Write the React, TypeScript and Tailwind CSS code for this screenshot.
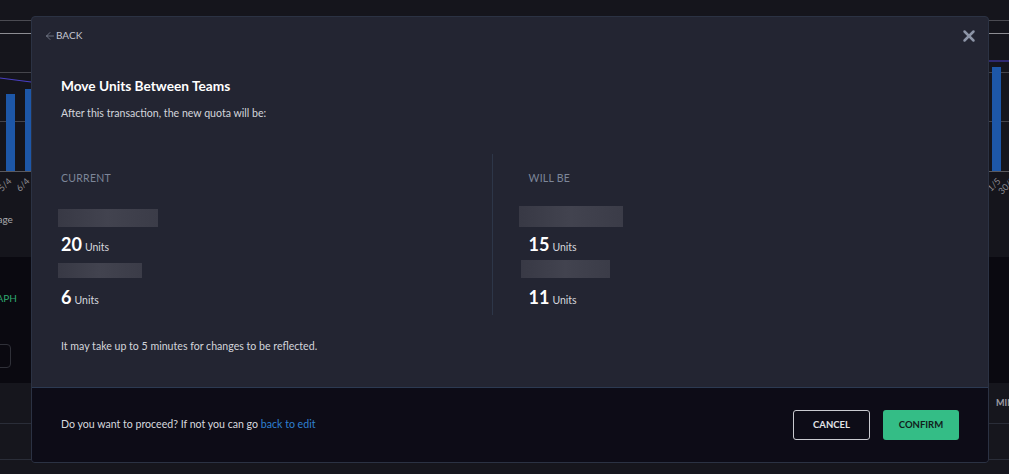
import { X, ArrowLeft } from "lucide-react";

const font = { fontFamily: "Lato, 'Noto Sans', sans-serif" };

const Redacted = ({ w, h, shift }: { w: string; h: string; shift: string }) => (
    <div className={`${h} ${w} ${shift} bg-gradient-to-r from-[#383945] via-[#42434f] to-[#3b3c48] blur-[0.5px]`} />
);

const Figure = ({ value }: { value: number }) => (
    <div className="flex items-baseline gap-[3px] text-white">
        <span className="text-[18px] font-bold leading-none">{value}</span>
        <span className="text-[10.5px] text-[#d6d8de]">Units</span>
    </div>
);

interface ColumnProps {
    label: string
    rows: number[]
    pad: string
    bars: { w: string; h: string; shift: string }[]
}

const Column = ({ label, rows, pad, bars }: ColumnProps) => (
    <div className={`flex-1 ${pad}`}>
        <div className="pt-[19px] text-[10.5px] text-[#7d8699] tracking-wide leading-none">{label}</div>
        <div className="mt-[25px]">
            <Redacted {...bars[0]} />
        </div>
        <div className="mt-[8px]"><Figure value={rows[0]} /></div>
        <div className="mt-[7px]">
            <Redacted {...bars[1]} />
        </div>
        <div className="mt-[10px]"><Figure value={rows[1]} /></div>
    </div>
);

// page behind the overlay
const Backdrop = () => (
    <div className="flex flex-col h-[474px] bg-[#15151c]">
        <div className="relative h-[200px]">
            <svg width="1009" height="200" className="block">
                <line x1="0" y1="20.5" x2="1009" y2="20.5" stroke="#4b4b52" />
                <line x1="0" y1="33.5" x2="1009" y2="33.5" stroke="#8d8d93" />
                <line x1="0" y1="72.5" x2="1009" y2="72.5" stroke="#45454c" />
                <line x1="0" y1="121.5" x2="1009" y2="121.5" stroke="#45454c" />
                <rect x="6" y="94" width="9" height="78" fill="#1d57a8" />
                <rect x="25" y="89" width="9" height="83" fill="#1d57a8" />
                <rect x="992" y="67" width="9" height="105" fill="#1d57a8" />
                <polyline points="0,78 31,82 500,70 989,61 1009,61" fill="none" stroke="#4a3fc4" strokeWidth="1.2" />
                <line x1="0" y1="171.5" x2="1009" y2="171.5" stroke="#5a5a60" />
                <text x="2" y="192" fontSize="9" fill="#8c8c92" transform="rotate(-45 2 192)" style={font}>5/4</text>
                <text x="20" y="192" fontSize="9" fill="#8c8c92" transform="rotate(-45 20 192)" style={font}>6/4</text>
                <text x="991" y="192" fontSize="9" fill="#8c8c92" transform="rotate(-45 991 192)" style={font}>1/5</text>
                <text x="1002" y="195" fontSize="9" fill="#8c8c92" transform="rotate(-45 1002 195)" style={font}>30/5</text>
            </svg>
        </div>
        <div className="h-[57px] pt-[12px] text-[10px] text-[#a9a9ae] -ml-[14px]">Usage</div>
        <div className="h-[126px] bg-[#0a0910] pt-[34px]">
            <div className="text-[10px] text-[#2fa86f] -ml-[17px]">GRAPH</div>
            <div className="mt-[38px] -ml-[20px] w-[31px] h-[24px] rounded border border-[#2f3038]" />
        </div>
        <div className="flex-1 bg-[#16161d]">
            <div className="h-[41px] border-b border-[#2a2d38] flex justify-end items-center">
                <span className="text-[9px] font-bold text-[#9c9ca3] -mr-[10px]">MINS</span>
            </div>
            <div className="h-[36px] border-b border-[#2a2d38]" />
        </div>
    </div>
);

export default function App() {
    return (
        <div className="relative w-[1009px] h-[474px] overflow-hidden" style={font}>
            <Backdrop />
            <div className="absolute left-[31px] top-[16px] w-[958px] h-[447px] rounded-[4px] border border-[#2b3243] bg-[#232532] flex flex-col overflow-hidden">
                <div className="flex-1 flex flex-col">
                    <div className="h-[36px] flex justify-between items-center pl-[12px] pr-[10px] pt-[1px]">
                        <button className="flex items-center text-[10px] text-[#c3c7d1]">
                            <ArrowLeft size={12} strokeWidth={1.2} className="text-[#9aa1b1]" />
                            BACK
                        </button>
                        <X size={18} strokeWidth={3.3} className="text-[#8c94a6]" />
                    </div>
                    <div className="px-[29px]">
                        <h2 className="mt-[26px] text-[13.7px] font-bold text-white leading-none">Move Units Between Teams</h2>
                        <p className="mt-[15px] text-[10.6px] text-[#d3d5dc] leading-none">After this transaction, the new quota will be:</p>
                        <div className="mt-[36px] flex h-[161px]">
                            <Column
                                label="CURRENT"
                                rows={[20, 6]}
                                pad=""
                                bars={[
                                    { w: "w-[100px]", h: "h-[18px]", shift: "-ml-[3px]" },
                                    { w: "w-[84px]", h: "h-[15px]", shift: "-ml-[3px]" },
                                ]}
                            />
                            <div className="w-px bg-[#2d3648]" />
                            <Column
                                label="WILL BE"
                                rows={[15, 11]}
                                pad="pl-[36px]"
                                bars={[
                                    { w: "w-[104px]", h: "h-[21px] -mt-[3px]", shift: "-ml-[10px]" },
                                    { w: "w-[89px]", h: "h-[18px] -mt-[3px]", shift: "-ml-[8px]" },
                                ]}
                            />
                        </div>
                        <p className="mt-[26px] text-[10.6px] text-[#d3d5dc] leading-none">It may take up to 5 minutes for changes to be reflected.</p>
                    </div>
                </div>
                <div className="h-[75px] shrink-0 border-t border-[#2c3a52] bg-[#0d0c17] flex items-center justify-between pl-[29px] pr-[29px]">
                    <p className="text-[10.6px] text-[#d7d9df]">
                        Do you want to proceed? If not you can go <a className="text-[#2f80d1]">back to edit</a>
                    </p>
                    <div className="flex gap-[13px]">
                        <button className="w-[77px] h-[30px] rounded-[3px] border border-[#c9cad0] text-[9.5px] font-bold text-[#e2e3e7]">CANCEL</button>
                        <button className="w-[76px] h-[30px] rounded-[3px] bg-[#34bd86] text-[9.5px] font-bold text-[#10201b]">CONFIRM</button>
                    </div>
                </div>
            </div>
        </div>
    );
}
